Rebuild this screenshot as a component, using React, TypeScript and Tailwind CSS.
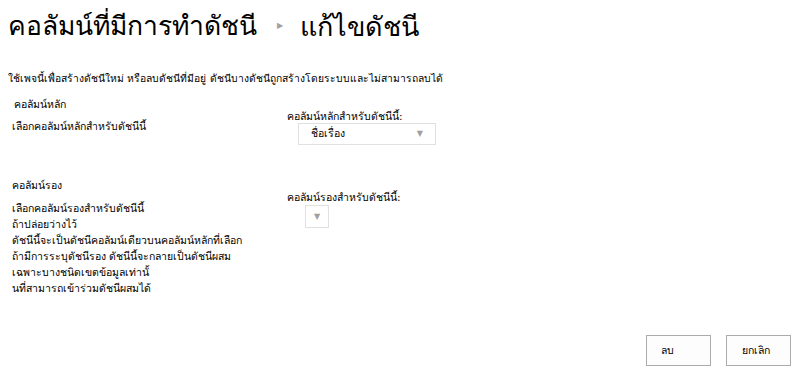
export default function App() {
  const font = { fontFamily: 'Tahoma, "DejaVu Sans", "Noto Sans", sans-serif' };
  return (
    <div className="w-[800px] h-[378px] bg-white text-black relative overflow-hidden" style={font}>
      {/* title */}
      <div className="flex items-center pl-[8px] pt-[7px] h-[45px]">
        <h1 className="text-[26.5px] leading-none">คอลัมน์ที่มีการทำดัชนี</h1>
        <span className="ml-[20px] mr-[17px] text-[8px] text-[#a0a0a0]">▶</span>
        <h1 className="text-[27px] leading-none">แก้ไขดัชนี</h1>
      </div>

      <p className="pl-[8px] mt-[26px] text-[10.3px] leading-[14px]">
        ใช้เพจนี้เพื่อสร้างดัชนีใหม่ หรือลบดัชนีที่มีอยู่ ดัชนีบางดัชนีถูกสร้างโดยระบบและไม่สามารถลบได้
      </p>

      {/* primary column */}
      <div className="flex mt-[12px]">
        <div className="w-[287px] pl-[12px]">
          <p className="text-[10.5px] leading-[14px] pl-[2px]">คอลัมน์หลัก</p>
          <p className="text-[10.5px] leading-[14px] mt-[8px]">เลือกคอลัมน์หลักสำหรับดัชนีนี้</p>
        </div>
        <div className="pt-[12px]">
          <p className="text-[10.5px] leading-[14px]">คอลัมน์หลักสำหรับดัชนีนี้:</p>
          <div className="ml-[11px] w-[138px] h-[22px] border border-[#e1e1e1] flex items-center justify-between px-[12px]">
            <span className="text-[10.5px]">ชื่อเรื่อง</span>
            <span className="text-[8px] text-[#a0a0a0]">▼</span>
          </div>
        </div>
      </div>

      {/* secondary column */}
      <div className="flex mt-[33px]">
        <div className="w-[287px] pl-[12px]">
          <p className="text-[10.5px] leading-[14px]">คอลัมน์รอง</p>
          <div className="mt-[8px] text-[10.5px] leading-[16px]">
            <p>เลือกคอลัมน์รองสำหรับดัชนีนี้</p>
            <p>ถ้าปล่อยว่างไว้</p>
            <p>ดัชนีนี้จะเป็นดัชนีคอลัมน์เดียวบนคอลัมน์หลักที่เลือก</p>
            <p>ถ้ามีการระบุดัชนีรอง ดัชนีนี้จะกลายเป็นดัชนีผสม</p>
            <p>เฉพาะบางชนิดเขตข้อมูลเท่านั้</p>
            <p>นที่สามารถเข้าร่วมดัชนีผสมได้</p>
          </div>
        </div>
        <div className="pt-[12px]">
          <p className="text-[10.5px] leading-[14px]">คอลัมน์รองสำหรับดัชนีนี้:</p>
          <div className="ml-[18px] mt-[1px] w-[24px] h-[23px] border border-[#e1e1e1] flex items-center justify-center">
            <span className="text-[8px] text-[#a0a0a0]">▼</span>
          </div>
        </div>
      </div>

      {/* buttons */}
      <div className="absolute right-[9px] bottom-[12px] flex gap-[15px]">
        <button className="w-[65px] h-[31px] border border-[#ababab] bg-[#fdfdfd] text-[10.5px] text-left pl-[14px]">ลบ</button>
        <button className="w-[65px] h-[31px] border border-[#ababab] bg-[#fdfdfd] text-[10.5px] text-left pl-[15px]">ยกเลิก</button>
      </div>
    </div>
  );
}
